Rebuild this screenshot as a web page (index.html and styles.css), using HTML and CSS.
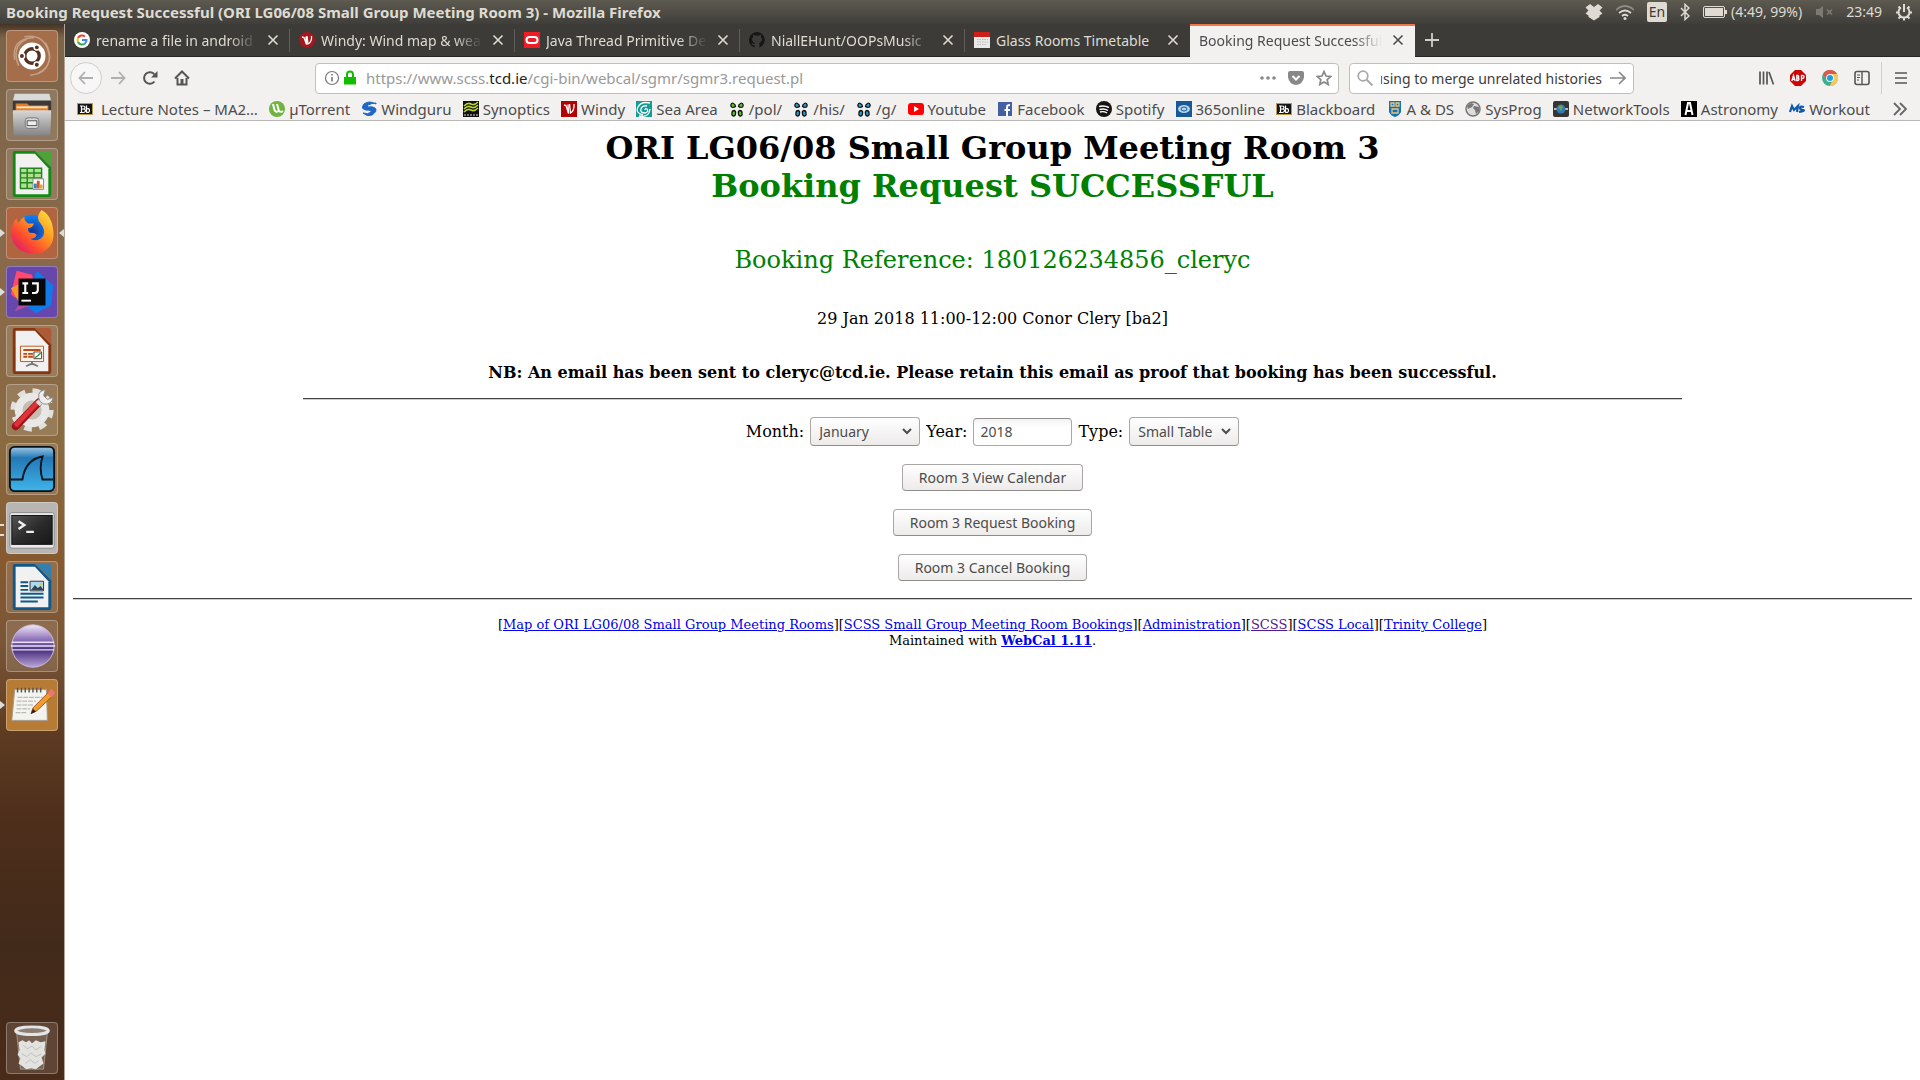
FILE: index.html
```html
<!DOCTYPE html>
<html lang="en">
<head>
<meta charset="utf-8">
<title>Booking Request Successful (ORI LG06/08 Small Group Meeting Room 3)</title>
<link rel="stylesheet" href="styles.css">
</head>
<body>
<svg class="defs" width="0" height="0" aria-hidden="true">
  <defs>
    <linearGradient id="g-steel" x1="0" y1="0" x2="0" y2="1"><stop offset="0" stop-color="#d8d8d8"/><stop offset="1" stop-color="#868686"/></linearGradient>
    <linearGradient id="g-fox" x1="1" y1="0" x2="0.1" y2="1"><stop offset="0" stop-color="#fff04a"/><stop offset="0.4" stop-color="#ff9a1f"/><stop offset="0.7" stop-color="#ff4a30"/><stop offset="1" stop-color="#d6117e"/></linearGradient>
    <radialGradient id="g-globe"><stop offset="0" stop-color="#1a2f8f"/><stop offset="1" stop-color="#0a84ff"/></radialGradient>
    <linearGradient id="g-shark" x1="0" y1="0" x2="0" y2="1"><stop offset="0" stop-color="#9fc8e6"/><stop offset="0.25" stop-color="#2478b4"/><stop offset="1" stop-color="#3fb4ea"/></linearGradient>
    <linearGradient id="g-term" x1="0" y1="0" x2="1" y2="1"><stop offset="0" stop-color="#555"/><stop offset="0.5" stop-color="#2c2c2c"/><stop offset="1" stop-color="#161616"/></linearGradient>
    <linearGradient id="g-ecl" x1="0" y1="0" x2="0" y2="1"><stop offset="0" stop-color="#efe8f8"/><stop offset="0.35" stop-color="#8e70b8"/><stop offset="0.6" stop-color="#4b2f7d"/><stop offset="1" stop-color="#b8a4da"/></linearGradient>
    <symbol id="i-bb" viewBox="0 0 16 16"><rect y="2" width="16" height="12" fill="#b79a4c"/><rect x="1" y="3" width="14" height="10" fill="#151515"/><path d="M3 5h3q2 0 2 1.500t-1.500 1.500q2 .300 2 1.800T6.500 11.500H3M4.500 5v6.500M4.500 8h2M9.500 4.500v7M9.500 8q3-1 3 1.500t-3 1.800" fill="none" stroke="#fff" stroke-width="1.200"/></symbol>
    <symbol id="i-clover" viewBox="0 0 16 16"><path d="M2 3.500q1-2 2.500-1 2 1 2 3-2 1.500-4 .500-1-1-.500-2.500zM14 3.500q-1-2-2.500-1-2 1-2 3 2 1.500 4 .500 1-1 .500-2.500zM3 12q0-2.500 2.500-2.500Q7 10 6.500 12.500 6.500 15 4.500 15T3 12zM13 12q0-2.500-2.500-2.500Q9 10 9.500 12.500q0 2.500 2 2.500T13 12z" fill="currentColor" stroke="#111" stroke-width="1.300"/></symbol>
    <symbol id="i-close" viewBox="0 0 16 16"><path d="M3.500 3.500l9 9M12.500 3.500l-9 9" stroke="currentColor" stroke-width="1.600"/></symbol>
    <symbol id="i-chevron" viewBox="0 0 10 10"><path d="M1 3l4 4 4-4" fill="none" stroke="#4c4c4c" stroke-width="2"/></symbol>
  </defs>
</svg>

<div class="desktop">
  <header class="panel">
    <div class="panel-title">Booking Request Successful (ORI LG06/08 Small Group Meeting Room 3) - Mozilla Firefox</div>
    <div class="tray">
      <svg class="tray-icon" viewBox="0 0 18 18"><path d="M5 1l4 3 4-3 4.500 3.500-3 3 3 3-3 2v1.500L9 17.500l-5.500-3.500v-1.500l-3-2 3-3-3-3z" fill="#dfdbd2"/></svg>
      <svg class="tray-icon" viewBox="0 0 18 18"><g fill="none" stroke="#dfdbd2" stroke-width="1.700"><path d="M0 7q9-8 18 0" stroke="#8d8a81"/><path d="M3 10q6-5 12 0M6 13q3-2.500 6 0"/></g><circle cx="9" cy="15.500" r="1.500" fill="#dfdbd2"/></svg>
      <span class="lang">En</span>
      <svg class="tray-bt" viewBox="0 0 10 18"><path d="M1 5l8 8-4 3.500v-15L9 5l-8 8" fill="none" stroke="#dfdbd2" stroke-width="1.500"/></svg>
      <span class="battery"><svg viewBox="0 0 24 14"><rect x=".5" y="1.500" width="21" height="11" rx="1.500" fill="none" stroke="#dfdbd2"/><rect x="2" y="3" width="18" height="8" fill="#dfdbd2"/><path d="M23 5v4" stroke="#dfdbd2" stroke-width="2"/></svg><span>(4:49, 99%)</span></span>
      <svg class="tray-icon mute" viewBox="0 0 18 18"><path d="M1 6h3l4-3v12l-4-3H1z" fill="#7d7a73"/><path d="M12 6.500l5 5M17 6.500l-5 5" stroke="#7d7a73" stroke-width="1.700"/></svg>
      <span class="clock">23:49</span>
      <svg class="tray-icon" viewBox="0 0 18 18"><path d="M6 4.500a5.500 5.500 0 1 0 6 0" fill="none" stroke="#dfdbd2" stroke-width="2"/><path d="M9 1v8M1 9.500h3M14 9.500h3M3.500 3.500l2 2M14.500 3.500l-2 2M3.500 15.500l2-2M14.500 15.500l-2-2M9 14.500v3" stroke="#dfdbd2" stroke-width="2"/></svg>
    </div>
  </header>

  <nav class="launcher" aria-label="Launcher">
    <button class="tile tile-dash" aria-label="Dash"><svg viewBox="0 0 52 52"><g fill="none" stroke="#fff" opacity=".35" stroke-width="1.500"><path d="M8 30Q4 8 28 7M12 36Q4 16 20 9M44 22q2 22-20 24M40 12q12 22-8 32M18 6q22-4 26 20"/></g><circle cx="26" cy="26" r="14" fill="#fff"/><circle cx="26" cy="26" r="7.500" fill="none" stroke="#54301f" stroke-width="3.500"/><g fill="#54301f" stroke="#fff" stroke-width="1.500"><circle cx="15.500" cy="26" r="2.800"/><circle cx="31" cy="17" r="2.800"/><circle cx="31" cy="35" r="2.800"/></g></svg></button>
    <button class="tile" aria-label="Files"><svg viewBox="0 0 52 52"><path d="M8 4h36l2 8H6z" fill="#d9d9d6"/><path d="M6 11h40v12H6z" fill="#3c3a36"/><path d="M9 14h12l2 2h20v6H9z" fill="#e57d25"/><path d="M10 17h32v2H10z" fill="#fae6c8"/><path d="M6 21h40l-1 26H7z" fill="url(#g-steel)"/><rect x="19" y="29" width="14" height="11" rx="3" fill="#d7d7d7" stroke="#777"/><rect x="21" y="32" width="10" height="5" fill="#eee" stroke="#555"/></svg></button>
    <button class="tile" aria-label="Calc"><svg viewBox="0 0 52 52"><path d="M30 2h14a2 2 0 0 1 2 2v14z" fill="#4ba43a"/><path d="M8 2h21l17 17v28a3 3 0 0 1-3 3H9a3 3 0 0 1-3-3V4a2 2 0 0 1 2-2z" fill="#138a13"/><path d="M9 5h20l14 15v27H9z" fill="#f1f1f1"/><path d="M14 20h22v21H14z" fill="#aee38d"/><path d="M14 20h22v21H14zM14 25h22M14 30h22M14 35h22M21 20v21M28 20v21" fill="none" stroke="#258322" stroke-width="1.500"/><path d="M27 31h11v11H27z" fill="#fff" stroke="#888"/><path d="M28 36h3v5h-3z" fill="#3985c4"/><path d="M31 33h3v8h-3z" fill="#db531e"/><path d="M34 37h3v4h-3z" fill="#f0a224"/></svg></button>
    <button class="tile tile-firefox running focused" aria-label="Firefox"><svg viewBox="0 0 52 52"><circle cx="26" cy="25" r="18" fill="url(#g-globe)"/><path d="M6 18q1-5 4-7 0 3 2 4 2-4 6-6 0 5 4 7h6q-1 4-6 5-1 3 2 5 4-1 7 2-2 4-7 4 8 4 13-2 4-6-2-14-6-6 1-14 10 5 12 20 3 19-14 25Q17 50 8 38 2 29 6 18z" fill="url(#g-fox)"/></svg></button>
    <button class="tile tile-idea running" aria-label="IntelliJ IDEA"><svg viewBox="0 0 52 52"><path d="M31 4l17 15-2 21-16 8-12-9z" fill="#1279e8"/><path d="M10 4l16 4 4 18-22 6L4 28z" fill="#ff4970"/><path d="M4 22l8-4v18z" fill="#f49a28"/><path d="M8 46l6-10 16 2z" fill="#b0509c"/><rect x="12" y="12" width="28" height="28" fill="#080808"/><path d="M16 17h6M19 17v10M16 27h6M26 17h6v7q0 3-3 3h-3" fill="none" stroke="#fff" stroke-width="2.200"/><path d="M15 35h10" stroke="#fff" stroke-width="2"/></svg></button>
    <button class="tile" aria-label="Impress"><svg viewBox="0 0 52 52"><path d="M30 2h14a2 2 0 0 1 2 2v14z" fill="#ae5a37"/><path d="M8 2h21l17 17v28a3 3 0 0 1-3 3H9a3 3 0 0 1-3-3V4a2 2 0 0 1 2-2z" fill="#8a3510"/><path d="M9 5h20l14 15v27H9z" fill="#f1f1f1"/><path d="M14 21h24v16H14z" fill="#fdf2e8" stroke="#c35421"/><path d="M17 24h18v2H17zM17 28h4v2h-4zM17 31h4v2h-4zM22 28h5v2h-5zM22 31h5v2h-5z" fill="#bb4c18"/><path d="M28 27h8v7h-8z" fill="#fff" stroke="#444"/><path d="M29 33l3-2 3-3" fill="none" stroke="#31942c" stroke-width="1.500"/><path d="M26 37v3M20 42q6-5 12 0" stroke="#777" stroke-width="2" fill="none"/></svg></button>
    <button class="tile" aria-label="System Settings"><svg viewBox="0 0 52 52"><circle cx="26" cy="26" r="20" fill="none" stroke="#e0e0de" stroke-width="5" stroke-dasharray="8 7.700"/><circle cx="26" cy="26" r="14" fill="#c6bdb1" stroke="#e8e8e6" stroke-width="8"/><path d="M9 43l24-25" stroke="#a41119" stroke-width="8" stroke-linecap="round"/><path d="M10 41l22-23" stroke="#dc3439" stroke-width="5" stroke-linecap="round"/><path d="M32 20l5-5" stroke="#ddd" stroke-width="6"/><path d="M40 5q-8 1-7 8 1 7 8 7 6-1 7-7l-6 2-4-4z" fill="#eee" stroke="#888"/></svg></button>
    <button class="tile" aria-label="Wireshark"><svg viewBox="0 0 52 52"><rect x="3" y="3" width="46" height="46" rx="5" fill="url(#g-shark)" stroke="#07131c" stroke-width="2"/><path d="M4 37h12Q19 16 37 13q-4 12 0 24h11" fill="none" stroke="#0b1720" stroke-width="2"/></svg></button>
    <button class="tile tile-terminal running-two" aria-label="Terminal"><svg viewBox="0 0 52 52"><rect x="3" y="10" width="46" height="37" rx="2" fill="#e9e9e9" stroke="#888"/><rect x="5" y="13" width="42" height="30" fill="url(#g-term)" stroke="#111"/><path d="M12 19l6 4-6 4M20 30h8" fill="none" stroke="#eee" stroke-width="2.500"/></svg></button>
    <button class="tile" aria-label="Writer"><svg viewBox="0 0 52 52"><path d="M30 2h14a2 2 0 0 1 2 2v14z" fill="#357fae"/><path d="M8 2h21l17 17v28a3 3 0 0 1-3 3H9a3 3 0 0 1-3-3V4a2 2 0 0 1 2-2z" fill="#11588a"/><path d="M9 5h20l14 15v27H9z" fill="#f1f1f1"/><path d="M14 21h8M14 25h8M14 29h8M14 33h24M14 37h24M14 41h18" stroke="#11588a" stroke-width="2"/><path d="M24 20h14v10H24z" fill="#a9daf4" stroke="#333"/><path d="M25 29l4-5 3 3 3-2 3 4z" fill="#37434b"/><circle cx="35" cy="23" r="1.500" fill="#efc72b"/></svg></button>
    <button class="tile" aria-label="Eclipse"><svg viewBox="0 0 52 52"><circle cx="27" cy="26" r="22" fill="url(#g-ecl)" stroke="#cbbbe2"/><path d="M5 22h44M4 26h46M5 30h44" stroke="#e9e0f4" stroke-width="1.500"/></svg></button>
    <button class="tile tile-notes running" aria-label="Text Editor"><svg viewBox="0 0 52 52"><path d="M8 10h33l1 32H5z" fill="#f3f3ef" stroke="#a49b89"/><path d="M11 8v5M15 8v5M19 8v5M23 8v5M27 8v5M31 8v5M35 8v5" stroke="#555" stroke-width="1.500"/><path d="M11 18h26M10 22h20M10 26h18M10 30h14M9 34h12" stroke="#aaa" stroke-dasharray="5 1"/><path d="M25 35l2-6 16-16 4 4-16 15z" fill="#f29a2e" stroke="#9c5715"/><path d="M42 14l4-5 4 4-3 5z" fill="#e87874"/><path d="M25 35l2-5 3 3z" fill="#222"/></svg></button>
    <button class="tile tile-trash" aria-label="Trash"><svg viewBox="0 0 52 52"><path d="M10 10h32l-4 38H14z" fill="#ffffff28" stroke="#ffffff60"/><path d="M12 20l4-2 4 2 3-2 3 3 4-3 5 2 5-1-1 9 1 4-4 4 2 6-4 3-4 3-5-1-5 1-4-3-4-3 2-5-3-4 2-5z" fill="#e2e2df"/><path d="M17 23l4 4 5-3 4 4 6-4M15 32l6 3 4-4 5 4 6-3M19 42l5-4 5 4 4-3" fill="none" stroke="#c0c0bd"/><ellipse cx="26" cy="8" rx="17" ry="4" fill="#8a7d74" stroke="#e5e5e5" stroke-width="3"/></svg></button>
  </nav>

  <div class="browser">
    <div class="tabs">
      <div class="tab"><svg class="fav" viewBox="0 0 16 16"><circle cx="8" cy="8" r="8" fill="#fff"/><g fill="none" stroke-width="2"><path d="M11 4.500A4.500 4.500 0 0 0 4 6" stroke="#ea4335"/><path d="M4 6a4.500 4.500 0 0 0 0 4" stroke="#fbbc05"/><path d="M4 10a4.500 4.500 0 0 0 7 1.500" stroke="#34a853"/><path d="M11 11.500A4.500 4.500 0 0 0 12.500 8H8" stroke="#4285f4"/></g></svg><span class="tab-label">rename a file in android studio</span><button class="tab-close" aria-label="Close tab"><svg><use href="#i-close"/></svg></button></div>
      <div class="tab"><svg class="fav" viewBox="0 0 16 16"><circle cx="8" cy="8" r="8" fill="#a3171e"/><path d="M3 5l2 .500 2.500 7L7 4.500M8 4l1 8q4-2 3.500-8" fill="none" stroke="#fff" stroke-width="1.300"/></svg><span class="tab-label">Windy: Wind map &amp; weather forecast</span><button class="tab-close" aria-label="Close tab"><svg><use href="#i-close"/></svg></button></div>
      <div class="tab"><svg class="fav" viewBox="0 0 16 16"><path d="M0 0h16v16H0z" fill="#ee1c25"/><rect x="2.500" y="5" width="11" height="6" rx="3" fill="none" stroke="#fff" stroke-width="2"/></svg><span class="tab-label">Java Thread Primitive Deprecation</span><button class="tab-close" aria-label="Close tab"><svg><use href="#i-close"/></svg></button></div>
      <div class="tab"><svg class="fav" viewBox="0 0 16 16"><path d="M8 0a8 8 0 0 0-2.500 15.600V13Q3 13.500 2.500 11.500 3.500 11 5.500 12l.500-1Q3 10 3 7l1-2V2.500l2 1h4l2-1V5l1 2q0 3-3 4l.500 1.500v3A8 8 0 0 0 8 0z" fill="#171515"/></svg><span class="tab-label">NiallEHunt/OOPsMusic</span><button class="tab-close" aria-label="Close tab"><svg><use href="#i-close"/></svg></button></div>
      <div class="tab"><svg class="fav" viewBox="0 0 16 16"><path d="M0 1h16v15H0z" fill="#e9e9e9"/><path d="M0 0h16v5H0z" fill="#cc1f1a"/><path d="M3 7.500h11M3 10h11M3 12.500h9" stroke="#bbb" stroke-dasharray="1.500 1"/></svg><span class="tab-label whole">Glass Rooms Timetable</span><button class="tab-close" aria-label="Close tab"><svg><use href="#i-close"/></svg></button></div>
      <div class="tab active"><span class="tab-label">Booking Request Successful (ORI LG06/08)</span><button class="tab-close" aria-label="Close tab"><svg><use href="#i-close"/></svg></button></div>
      <button class="new-tab" aria-label="New tab"><svg viewBox="0 0 16 16"><path d="M8 1v14M1 8h14" stroke="#d0cfcc" stroke-width="1.800"/></svg></button>
    </div>

    <div class="toolbar">
      <button class="tool back" aria-label="Back"><svg viewBox="0 0 16 16"><path d="M15 8H1.500M7 2L1.500 8 7 14" fill="none" stroke="#b0afad" stroke-width="1.800"/></svg></button>
      <button class="tool" aria-label="Forward"><svg viewBox="0 0 16 16"><path d="M1 8h13.500M9 2l5.500 6L9 14" fill="none" stroke="#b0afad" stroke-width="1.800"/></svg></button>
      <button class="tool" aria-label="Reload"><svg viewBox="0 0 16 16"><path d="M12.500 11.500A5.800 5.800 0 1 1 12.500 4.500" fill="none" stroke="#555" stroke-width="2"/><path d="M15.500 1v6.500H9z" fill="#555"/></svg></button>
      <button class="tool" aria-label="Home"><svg viewBox="0 0 16 16"><path d="M1 8.500l7-7 7 7M3.500 8v6.500h9V8" fill="none" stroke="#555" stroke-width="2"/><path d="M6.500 9h3v6h-3z" fill="#555"/></svg></button>
      <div class="urlbar">
        <svg viewBox="0 0 16 16"><circle cx="8" cy="8" r="6.500" fill="none" stroke="#777" stroke-width="1.200"/><path d="M8 7v4.500M8 4v1.500" stroke="#777" stroke-width="1.600"/></svg>
        <svg class="lock" viewBox="0 0 16 16"><path d="M2 7h12v7.500H2z" fill="#12bc00"/><path d="M5 8V4.500a3 3 0 0 1 6 0V8" fill="none" stroke="#12bc00" stroke-width="2"/></svg>
        <div class="url" role="textbox" aria-label="Address">https://www.scss.<b>tcd.ie</b>/cgi-bin/webcal/sgmr/sgmr3.request.pl</div>
        <button class="mini" aria-label="Page actions"><svg viewBox="0 0 16 16"><g fill="#888"><circle cx="2" cy="8" r="1.800"/><circle cx="8" cy="8" r="1.800"/><circle cx="14" cy="8" r="1.800"/></g></svg></button>
        <button class="mini" aria-label="Save to Pocket"><svg viewBox="0 0 16 16"><path d="M2 1h12q2 0 2 2v4q-1 7-8 8-7-1-8-8V3q0-2 2-2z" fill="#888"/><path d="M4.500 6L8 9.500 11.500 6" fill="none" stroke="#fff" stroke-width="2"/></svg></button>
        <button class="mini" aria-label="Bookmark"><svg viewBox="0 0 16 16"><path d="M8 1.500l2 4.500 4.800.500-3.600 3.200 1 4.800L8 12l-4.200 2.500 1-4.800L1.200 6.500 6 6z" fill="none" stroke="#888" stroke-width="1.700"/></svg></button>
      </div>
      <div class="search">
        <svg viewBox="0 0 16 16"><circle cx="6" cy="6" r="4.800" fill="none" stroke="#aaa" stroke-width="1.800"/><path d="M9.500 9.500l6 6" stroke="#aaa" stroke-width="2"/></svg>
        <input type="text" aria-label="Search" value="fatal: refusing to merge unrelated histories">
        <button class="mini" aria-label="Go"><svg viewBox="0 0 16 16"><path d="M0 8h15M9 2l6 6-6 6" fill="none" stroke="#888" stroke-width="1.600"/></svg></button>
      </div>
      <div class="tools-right">
        <button class="tool" aria-label="Library"><svg viewBox="0 0 16 16"><path d="M2 1.500v13M5.500 1.500v13M9 1.500v13M11 2l4.500 12.500" stroke="#555" stroke-width="1.700"/></svg></button>
        <button class="tool" aria-label="Adblock Plus"><svg viewBox="0 0 16 16"><path d="M5 0h6l5 5v6l-5 5H5l-5-5V5z" fill="#c90505"/><path d="M1.800 11L3.500 5.500 5.200 11M2.500 9.300h2M6.800 5.500v5H8q2-1.300 0-2.600 1.500-1.200 0-2.400zM11.500 11V5.500q3-.300 2.500 1.500t-2.500 1.500" fill="none" stroke="#fff" stroke-width="1.300"/></svg></button>
        <button class="tool" aria-label="Chrome"><svg viewBox="0 0 16 16"><circle cx="8" cy="8" r="8" fill="#3fae8b"/><path d="M1 4a8 8 0 0 1 14 0H8L4.500 10z" fill="#e2574c"/><path d="M15 4a8 8 0 0 1-7.500 12l4-7L9 4z" fill="#f4c85b"/><circle cx="8" cy="8" r="3.900" fill="#fff"/><circle cx="8" cy="8" r="3" fill="#1a9fe0"/></svg></button>
        <button class="tool" aria-label="Sidebars"><svg viewBox="0 0 16 16"><rect x="1" y="1.500" width="14" height="13" rx="2" fill="none" stroke="#555" stroke-width="1.600"/><path d="M8 2v12" stroke="#555" stroke-width="1.400"/><path d="M3 5h3M3 7.500h3M3 10h2" stroke="#555"/></svg></button>
        <span class="divider"></span>
        <button class="tool" aria-label="Menu"><svg viewBox="0 0 16 16"><path d="M2 3h12M2 8h12M2 13h12" stroke="#555" stroke-width="1.700"/></svg></button>
      </div>
    </div>

    <div class="bookmarks">
      <ul>
        <li><a href="#" class="wide"><svg><use href="#i-bb"/></svg>Lecture Notes – MA2…</a></li>
        <li><a href="#"><svg viewBox="0 0 16 16"><circle cx="8" cy="8" r="8" fill="#6eb43f"/><path d="M4 3l1.500 6q1.500 3 4 1M8 3l2 7q2 1.500 4 0" fill="none" stroke="#fff" stroke-width="2"/></svg>µTorrent</a></li>
        <li><a href="#"><svg viewBox="0 0 16 16"><path d="M15 3Q8-1 3 3-1 8 5 9q6 0 5 2-3 3-8 1 4 4 9 2 6-4 3-7-3-2-7-1-2-1 0-2 4-2 8-2z" fill="#1e68c8" stroke="#1e68c8"/></svg>Windguru</a></li>
        <li><a href="#"><svg viewBox="0 0 16 16"><path d="M0 0h16v16H0z" fill="#111"/><path d="M1 5q4-4 7-2t7-2M1 8q4-4 7-2t7-2M1 11q4-4 7-2t7-2" fill="none" stroke="#b7d334" stroke-width="1.600"/><path d="M1 14h14" stroke="#ddd" stroke-dasharray="2 1"/></svg>Synoptics</a></li>
        <li><a href="#"><svg viewBox="0 0 16 16"><path d="M0 0h16v16H0z" fill="#b10303"/><path d="M3 4l2 .500 2.500 8L7 3.500M8.500 3l1 9q4-2 3.500-9" fill="none" stroke="#fff" stroke-width="1.300"/></svg>Windy</a></li>
        <li><a href="#"><svg viewBox="0 0 16 16"><path d="M0 0h16v16H0z" fill="#159c94"/><path d="M14 2Q5 0 2 6t5 8M11 5Q6 4 5 8t4 4q4-1 2-4-2-1-2 1M3 15q10 2 11-7" fill="none" stroke="#fff" stroke-width="1.300"/></svg>Sea Area</a></li>
        <li><a href="#" class="green"><svg><use href="#i-clover"/></svg><span>/pol/</span></a></li>
        <li><a href="#" class="blue"><svg><use href="#i-clover"/></svg><span>/his/</span></a></li>
        <li><a href="#" class="blue"><svg><use href="#i-clover"/></svg><span>/g/</span></a></li>
        <li><a href="#"><svg viewBox="0 0 16 16"><rect y="2" width="16" height="12" rx="3" fill="#f00"/><path d="M6 5l5 3-5 3z" fill="#fff"/></svg>Youtube</a></li>
        <li><a href="#"><svg viewBox="0 0 16 16"><path d="M1 1h14v14H1z" fill="#4460a0"/><path d="M10 15V6q0-2 3-2M7.500 9H13" fill="none" stroke="#fff" stroke-width="2"/></svg>Facebook</a></li>
        <li><a href="#"><svg viewBox="0 0 16 16"><circle cx="8" cy="8" r="8" fill="#191414"/><path d="M3 5.500q5-1.500 10 1M3.500 8.500q5-1.500 8.500 1M4 11q4-1 7 1" fill="none" stroke="#fff" stroke-width="1.400"/></svg>Spotify</a></li>
        <li><a href="#"><svg viewBox="0 0 16 16"><path d="M0 0h16v16H0z" fill="#185a97"/><ellipse cx="8" cy="8" rx="6" ry="4" fill="#b9d3ea"/><ellipse cx="8" cy="8" rx="3" ry="2" fill="none" stroke="#185a97"/></svg>365online</a></li>
        <li><a href="#"><svg><use href="#i-bb"/></svg>Blackboard</a></li>
        <li><a href="#"><svg viewBox="0 0 16 16"><path d="M2 0h12v11q-2 4-6 5-4-1-6-5z" fill="#0e73b9"/><path d="M4 2h3v3H4zM9 2h3v3H9zM5 8h6v4H5z" fill="none" stroke="#f0c27b" stroke-width="1.300"/></svg>A &amp; DS</a></li>
        <li><a href="#"><svg viewBox="0 0 16 16"><circle cx="8" cy="8" r="7" fill="#ddd" stroke="#777" stroke-width="1.500"/><path d="M2 5l4-3 3 1-2 3-4 2zM9 5l5 1v4l-3 3-1-4-2-2z" fill="#777"/></svg>SysProg</a></li>
        <li><a href="#"><svg viewBox="0 0 16 16"><rect width="16" height="16" rx="2" fill="#353535"/><path d="M1 8h14" stroke="#bbb" stroke-width="2"/><circle cx="8" cy="8" r="4.500" fill="#3178bd"/><path d="M5 6l3-2 2 2-2 4z" fill="#69a942"/></svg>NetworkTools</a></li>
        <li><a href="#"><svg viewBox="0 0 16 16"><path d="M0 0h16v16H0z" fill="#000"/><path d="M4.500 14L7 2h2l2.500 12M6 10h4" fill="none" stroke="#fff" stroke-width="2"/></svg>Astronomy</a></li>
        <li><a href="#"><svg viewBox="0 0 16 16"><path d="M1 11l2-6 2 4 4-4-1 6M15 6q-4-1-4 .800t3 2.200-4 2" fill="none" stroke="#1058a8" stroke-width="2.200"/></svg>Workout</a></li>
      </ul>
      <button class="more" aria-label="More bookmarks"><svg viewBox="0 0 16 16"><path d="M2 2l6 6-6 6M8 2l6 6-6 6" fill="none" stroke="#666" stroke-width="1.800"/></svg></button>
    </div>

    <main class="page">
      <h1>ORI LG06/08 Small Group Meeting Room 3<br><span class="ok">Booking Request SUCCESSFUL</span></h1>
      <p class="reference">Booking Reference: 180126234856_cleryc</p>
      <p class="slot">29 Jan 2018 11:00-12:00 Conor Clery [ba2]</p>
      <p class="notice">NB: An email has been sent to cleryc@tcd.ie. Please retain this email as proof that booking has been successful.</p>
      <hr class="short">
      <form class="booking">
        <div class="fields">
          <label for="month">Month:</label>
          <span class="select"><select id="month"><option>January</option></select><svg><use href="#i-chevron"/></svg></span>
          <label for="year">Year:</label>
          <input id="year" type="text" value="2018">
          <label for="type">Type:</label>
          <span class="select"><select id="type"><option>Small Table</option></select><svg><use href="#i-chevron"/></svg></span>
        </div>
        <button type="button">Room 3 View Calendar</button>
        <button type="button">Room 3 Request Booking</button>
        <button type="button">Room 3 Cancel Booking</button>
      </form>
      <hr>
      <footer>
        [<a href="#">Map of ORI LG06/08 Small Group Meeting Rooms</a>][<a href="#">SCSS Small Group Meeting Room Bookings</a>][<a href="#">Administration</a>][<a href="#" class="seen">SCSS</a>][<a href="#">SCSS Local</a>][<a href="#">Trinity College</a>]<br>
        Maintained with <a href="#"><b>WebCal 1.11</b></a>.
      </footer>
    </main>
  </div>
</div>
</body>
</html>
```
FILE: styles.css
```css
* { box-sizing: border-box; }

body {
  margin: 0;
  font-family: "Noto Sans", "Open Sans", sans-serif;
  font-size: 14px;
  color: #4c4c4c;
  background: #fff;
}

button { font: inherit; color: inherit; border: 0; padding: 0; background: none; }
.defs { position: absolute; }

.desktop {
  display: grid;
  grid-template-columns: 65px 1fr;
  grid-template-rows: 24px 1fr;
  min-height: 100vh;
}

/* Top panel */
.panel {
  grid-column: 1 / -1;
  display: flex;
  align-items: center;
  justify-content: space-between;
  padding: 0 7px 0 6px;
  line-height: 20px;
  color: #dfdbd2;
  background: linear-gradient(#5d5a50, #3f3e3a);
}
.panel-title { font-size: 15px; font-weight: bold; white-space: nowrap; }
.tray { display: flex; align-items: center; gap: 13px; }
.tray-icon { width: 18px; height: 18px; }
.tray-bt { width: 10px; height: 18px; }
.lang {
  width: 20px;
  height: 20px;
  border-radius: 2px;
  text-align: center;
  color: #3c3b37;
  background: #dfdbd2;
}
.battery { display: flex; align-items: center; gap: 4px; }
.battery svg { width: 24px; height: 14px; }

/* Launcher */
.launcher {
  display: flex;
  flex-direction: column;
  gap: 7px;
  padding: 6px 6px;
  border-right: 1px solid #b3a392;
  background: linear-gradient(#433426, #7c6449 14px, #89694a 240px, #8a6a40 420px, #86592f 540px, #7a5637 620px, #5c3b21 710px, #4d2e1b 800px, #422a1a 920px, #4a2b19);
}
.tile {
  position: relative;
  width: 52px;
  height: 52px;
  border: 1px solid #ffffff48;
  border-radius: 4px;
  background: #ffffff20;
}
.tile svg { display: block; width: 50px; height: 50px; }
.tile-dash { background: #a56e4b; }
.tile-firefox { background: #b06540; }
.tile-idea { background: #6847ac; }
.tile-terminal { background: #b9b5b2; }
.tile-notes { background: #b67c35; }
.tile-trash { margin-top: auto; }
.running::before, .focused::after, .running-two::before {
  content: "";
  position: absolute;
  top: 21px;
  left: -7px;
  border: 4px solid transparent;
  border-left: 5px solid #ddd;
  border-right: 0;
}
.focused::after { left: 52px; border-left: 0; border-right: 5px solid #ddd; }
.running-two::before { height: 8px; width: 4px; border: solid #ddd; border-width: 2px 0; }

/* Tabs */
.browser { display: flex; flex-direction: column; min-width: 0; background: #fff; }
.tabs { display: flex; height: 33px; background: #3c3b37; border-bottom: 1px solid #262522; }
.tab {
  position: relative;
  display: flex;
  align-items: center;
  flex: 0 1 225px;
  min-width: 0;
  padding: 0 9px;
  color: #dfdbd2;
}
.tab:not(.active)::after {
  content: "";
  position: absolute;
  inset: 5px 0 4px auto;
  width: 1px;
  background: #5f5e5a;
}
.tab:nth-child(5)::after { display: none; }
.tab.active {
  margin-bottom: -1px;
  padding-bottom: 3px;
  border-top: 2px solid #f0764c;
  color: #4c4c4c;
  background: #f2f1f0;
}
.fav { flex: none; width: 16px; height: 16px; margin-right: 6px; }
.tab-label {
  flex: 1;
  overflow: hidden;
  white-space: nowrap;
  mask-image: linear-gradient(to left, transparent, #000 28px);
}
.tab-label.whole { mask-image: none; }
.tab-close { flex: none; width: 16px; height: 16px; margin-left: 8px; }
.tab-close svg { display: block; width: 16px; height: 16px; }
.new-tab { display: grid; place-items: center; width: 34px; height: 31px; }
.new-tab svg { width: 16px; height: 16px; }

/* Navigation toolbar */
.toolbar { display: flex; align-items: center; height: 42px; padding: 0 3px 0 5px; background: #f2f1f0; }
.tool { flex: none; width: 32px; height: 32px; display: grid; place-items: center; }
.tool svg { width: 16px; height: 16px; }
.back { border: 1px solid #cfcecc; border-radius: 50%; background: #f8f7f7; }
.urlbar, .search {
  display: flex;
  align-items: center;
  height: 31px;
  border: 1px solid #c0bfbd;
  border-radius: 4px;
  background: #fff;
}
.urlbar { flex: 1; margin: 0 10px 0 117px; padding: 0 6px 0 8px; }
.urlbar svg, .search svg { flex: none; width: 16px; height: 16px; }
.urlbar .lock { margin: 0 8px 0 2px; }
.url { flex: 1; font-size: 15px; color: #999; white-space: nowrap; }
.url b { font-weight: normal; color: #222; }
.mini { width: 16px; height: 16px; margin-left: 12px; }
.mini svg { display: block; }
.search { flex: none; width: 285px; padding: 0 7px; }
.search input {
  flex: 1;
  min-width: 0;
  margin-left: 8px;
  padding: 0;
  border: 0;
  font: inherit;
  color: #3c3c3c;
  direction: rtl;
  background: none;
}
.search .mini { margin-left: 8px; }
.tools-right { display: flex; align-items: center; margin-left: 116px; }
.divider { width: 1px; height: 32px; margin: 0 3px; background: #d0cfcd; }

/* Bookmarks toolbar */
.bookmarks {
  display: flex;
  align-items: center;
  height: 22px;
  padding: 0 12px 2px;
  border-bottom: 1px solid #b9b8b6;
  background: #f2f1f0;
}
.bookmarks ul {
  flex: 1;
  display: flex;
  justify-content: space-between;
  margin: 0;
  padding: 0;
  list-style: none;
}
.bookmarks a {
  display: flex;
  align-items: center;
  gap: 4px;
  font-size: 15px;
  line-height: 20px;
  color: inherit;
  text-decoration: none;
  white-space: nowrap;
}
.bookmarks .wide { gap: 8px; }
.bookmarks a svg { width: 16px; height: 16px; }
.green svg { color: #5cc928; }
.blue svg { color: #2f9bd0; }
.bookmarks span { color: #4c4c4c; }
.more { width: 16px; height: 16px; margin-left: 22px; }
.more svg { display: block; }

/* Booking page */
.page {
  padding: 8px;
  font-family: "DejaVu Serif", serif;
  font-size: 16px;
  line-height: 19px;
  text-align: center;
  color: #000;
}
.page p, .page h1 { margin: 0; }
h1 { font-size: 32px; line-height: 38px; }
.ok, .page .reference { color: #008000; }
.page .reference { margin-top: 41px; font-size: 24px; line-height: 28px; }
.page .slot { margin-top: 35px; }
.page .notice { margin-top: 35px; font-weight: bold; }
hr { height: 2px; margin: 17px 0; border: 0; border-top: 1px solid #444; background: #ccc; }
hr.short { width: 75%; margin: 16px auto 17px; }
.booking { display: flex; flex-direction: column; align-items: center; gap: 18px; }
.fields { display: flex; align-items: center; gap: 6px; }
.booking button, .booking input, .booking select {
  font-family: "Noto Sans", "Open Sans", sans-serif;
  font-size: 14px;
  color: #4c4c4c;
  border: 1px solid #aaa8a6;
  border-bottom-color: #8f8d8b;
  border-radius: 4px;
  background: linear-gradient(#fff, #edebea);
}
.booking button { height: 27px; padding: 0 16px; line-height: 20px; }
.booking input { width: 99px; height: 28px; padding: 0 6px; border-color: #8f8d8b #aaa8a6 #aaa8a6; background: linear-gradient(#f2f2f2, #fff 8px); }
.select { position: relative; }
.select select { appearance: none; display: block; width: 110px; height: 29px; padding: 0 8px; }
.select svg { position: absolute; top: 9px; right: 8px; width: 10px; height: 10px; pointer-events: none; }
footer { font-size: 13px; line-height: 16px; }
footer a { color: #0000ee; }
footer .seen { color: #551a8b; }
```
